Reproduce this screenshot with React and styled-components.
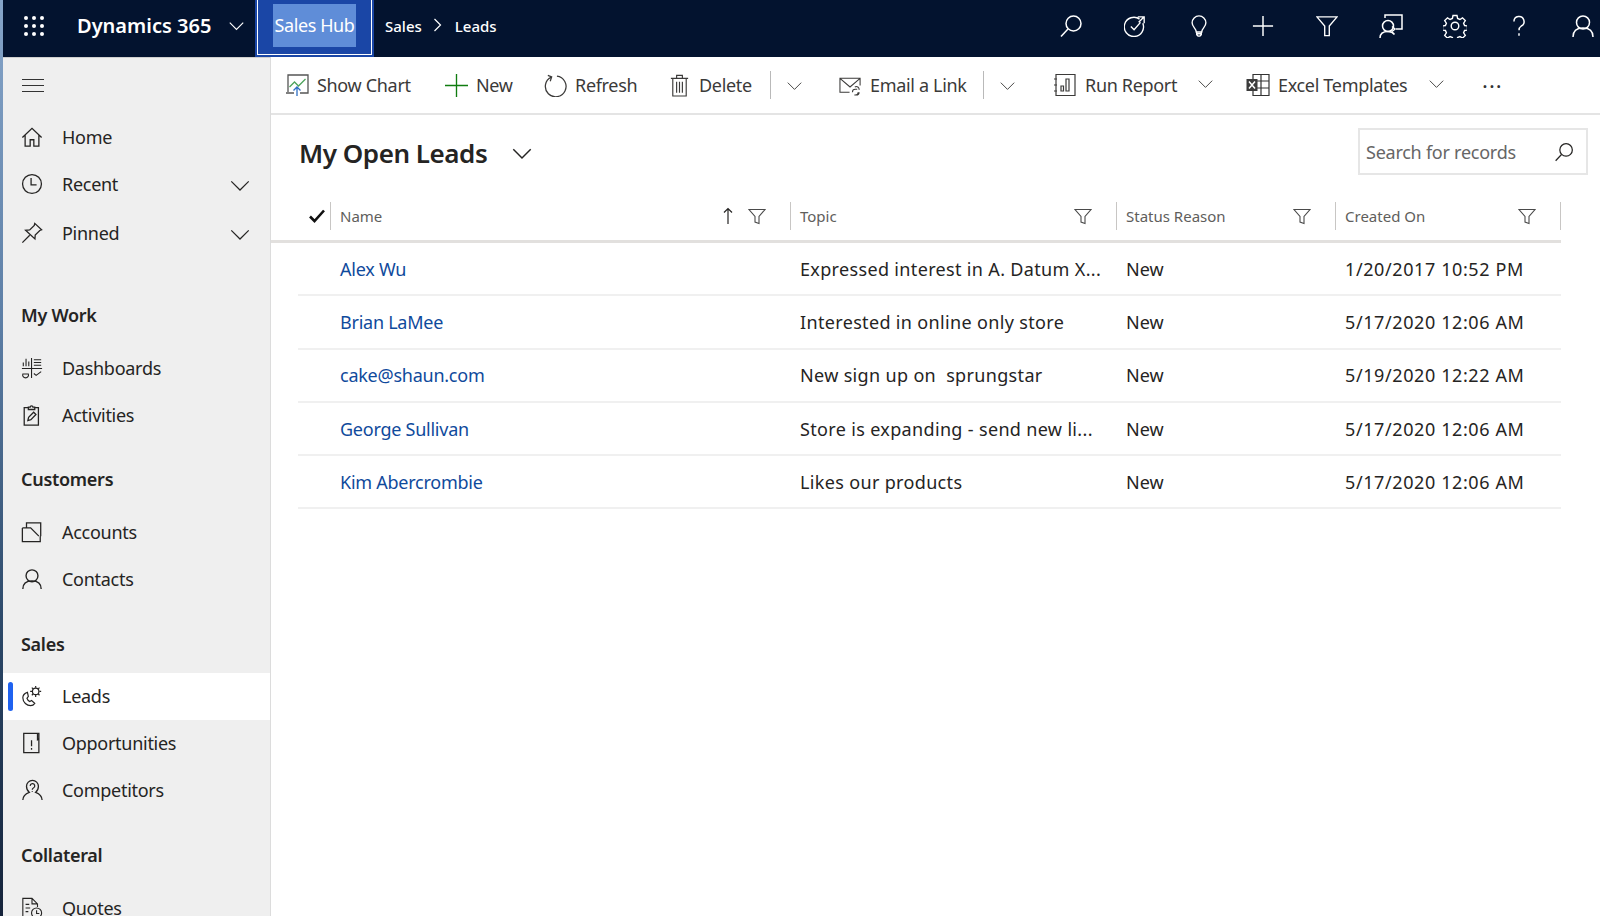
import React from "react";
import styled, { createGlobalStyle } from "styled-components";

const GlobalStyle = createGlobalStyle`
  html, body { margin: 0; padding: 0; height: 100%; overflow: hidden; background: #fff; }
  body { font-family: "Noto Sans", "Open Sans", "Liberation Sans", sans-serif; color: #252423; }
`;

const Svg = ({ size = 22, box = 24, children, color = "currentColor", sw = 1.4 }) => (
  <svg width={size} height={size} viewBox={`0 0 ${box} ${box}`} fill="none" stroke={color} strokeWidth={sw}>
    {children}
  </svg>
);

const Chevron = ({ size = 22, sw = 1.4, color }) => (
  <Svg size={size} sw={sw} color={color}>
    <path d="M2.5 8l9.5 9.5L21.5 8" />
  </Svg>
);

const Funnel = () => (
  <Svg size={18} box={18} sw={1.1} color="#4a4a4a">
    <path d="M1 2.5h16l-6 7v7l-4-1.5v-5.5z" />
  </Svg>
);

const Lens = ({ size = 24, color }) => (
  <Svg size={size} sw={1.5} color={color}>
    <circle cx="14.5" cy="9.5" r="7.5" />
    <path d="M9 15L2 22.5" />
  </Svg>
);

const Person = ({ size = 24, color }) => (
  <Svg size={size} sw={1.5} color={color}>
    <circle cx="12" cy="8.5" r="6.5" />
    <path d="M2 23c0-6 4-9 10-9s10 3 10 9" />
  </Svg>
);

const icons = {
  home: (
    <Svg>
      <path d="M1.5 12.5L12 2.5l10.5 10M4.5 10v12h5.5v-7h4v7h5.5V10" />
    </Svg>
  ),
  recent: (
    <Svg>
      <circle cx="12" cy="12" r="10.3" />
      <path d="M11 5.5V13h6" />
    </Svg>
  ),
  pinned: (
    <Svg>
      <path d="M15 1.5l7.5 7-2 .8-5 5-.3 4.2L5 9l4.5-.3 5-5zM9.5 14.5L1.5 22.5" />
    </Svg>
  ),
  dashboards: (
    <Svg sw={1.2}>
      <path d="M1 12.5h22M11.5 1v22M14 3h8M14 6h8M14 9h8M2.5 10V6M5.5 10V2M8.5 10V5M14 18l2.5 2 5.500-4M2 18.5a3.2 3.2 0 1 0 6 0z" />
    </Svg>
  ),
  activities: (
    <Svg>
      <path d="M8 4H3.5v19h15.5V4H15M8 6V3.5h2a1.5 1.5 0 0 1 3 0h2V6z" />
      <path d="M7.5 18l.8-3.5 5.5-5.5 2.5 2.5-5.5 5.5z" />
    </Svg>
  ),
  accounts: (
    <Svg>
      <path d="M1.5 7.5h9l9 9M1.500 7.5v15h19.5v-6M6 7.5V2h15.5v14.5" />
    </Svg>
  ),
  contacts: <Person size={22} />,
  leads: (
    <Svg sw={1.3}>
      <path d="M7 8C4 9 2 11 2 14c0 5 4.5 8.5 8.5 8.5 2 0 3.5-1 4.5-2.5l-3.5-3-2 1c-1.5-.8-2.5-2-3-3.5l1.5-2z" />
      <circle cx="16" cy="7" r="3.5" />
      <path d="M16 1v2M16 11v2M10 7h2M20 7h2M11.8 2.8l1.4 1.4M18.800 9.8l1.4 1.4M11.8 11.2l1.4-1.4M18.8 4.2l1.4-1.4" />
    </Svg>
  ),
  opportunities: (
    <Svg>
      <path d="M18 1.5H3v21h16.5V1.5H18v7l1.5-1M11.5 9v6.5M11.5 17.500v1.8" />
    </Svg>
  ),
  competitors: (
    <Svg>
      <path d="M2 23c0-5 3-7 7-8.5-2-1.5-3-3.5-3-6.5a6.5 6.5 0 0 1 13 0c0 3-1 5-3 6.5 4 1.5 7 3.5 7 8.5" />
      <path d="M10 7.5a2.5 2.5 0 1 1 3.5 2.3c-1 .5-1.2 1-1.2 2M12.3 13v1" />
    </Svg>
  ),
  quotes: (
    <Svg sw={1.2}>
      <path d="M10 23H2V1.5h10l6 6V11M12 1.5v6h6M5 8h4M5 12h5M5 16h3" />
      <circle cx="17" cy="17.5" r="5.5" />
      <path d="M17 14.5V18h3" />
    </Svg>
  ),
  chart: (
    <svg width="24" height="24" viewBox="0 0 24 24" fill="none" strokeWidth="1.3">
      <path d="M3 19V2h20v18h-8M9 20H1" stroke="#555" />
      <path d="M4.5 14l5-5 4 4 7-7" stroke="#4ea35c" />
      <path d="M12 23v-9M8.5 17.5L12 14l3.5 3.5" stroke="#2f6fc4" />
    </svg>
  ),
  plus: (
    <Svg size={23} sw={1.4} color="#107c10">
      <path d="M12 0v24M0 12h24" />
    </Svg>
  ),
  refresh: (
    <Svg size={23} sw={1.3}>
      <path d="M7.5 3.2a10.8 10.8 0 1 0 6-1M4 1.5L8 3 6.5 7.5" />
    </Svg>
  ),
  trash: (
    <Svg size={23} sw={1.2}>
      <path d="M3 4.5h18M5 4.5V23h14V4.5M9 4.5v-3h6v3M9 8v11.5M12 8v11.5M15 8v11.5" />
    </Svg>
  ),
  mail: (
    <Svg size={23} sw={1.1}>
      <path d="M11 19H1V4.5h21V12M1 4.5l10.5 9 10.5-9" />
      <path d="M14 19a3 3 0 0 1 3-3h2M20 19a3 3 0 0 1-3 3h-1M16.5 13.5a3 3 0 0 1 4.5 3M21 19a3 3 0 0 1-3 3" />
    </Svg>
  ),
  report: (
    <Svg size={24} sw={1.2}>
      <path d="M3 1.5h19v21H3zM1 6h3M1 12h3M1 18h3M8 18v-5h2.5v5zM13 18V6h3v12z" />
    </Svg>
  ),
  excel: (
    <svg width="24" height="24" viewBox="0 0 24 24" fill="none" stroke="#333" strokeWidth="1.2">
      <path d="M7 1.5h16v21H7zM7 8h16M7 15h16M15 1.5v21" />
      <rect x="0.5" y="6" width="11" height="12" fill="#3b3b3b" stroke="none" />
      <path d="M3 8.5l6 7M9 8.5l-6 7" stroke="#fff" strokeWidth="1.5" />
    </svg>
  ),
};

const headerIcons = [
  <Lens key="s" color="#fff" />,
  <Svg key="t" color="#fff" sw={1.5}>
    <path d="M17 4.5A10.5 10.5 0 1 0 20.5 9M7.5 12.5L11 16l7-8M15 2h7v7M22 2l-6 6" />
  </Svg>,
  <Svg key="b" color="#fff" sw={1.5}>
    <path d="M9 18.5c0-4-4.5-5-4.500-10a7.500 7.500 0 0 1 15 0c0 5-4.500 6-4.500 10zM9.500 18.500v3L11 23h2l1.500-1.500v-3M9.500 20.500h5" />
  </Svg>,
  <Svg key="p" color="#fff" sw={1.6}>
    <path d="M12 1v22M1 12h22" />
  </Svg>,
  <Svg key="f" color="#fff" sw={1.5}>
    <path d="M1 2h22l-8.500 10v10.500h-5V12z" />
  </Svg>,
  <Svg key="a" color="#fff" size={24} sw={1.5}>
    <circle cx="9" cy="12" r="5.5" />
    <path d="M1 24c0-4.500 3.500-6.500 8-6.500 3 0 5 1 6.500 3M6 4V1h17v14h-6M13 12.500l3 2.500-3 2.500" />
  </Svg>,
  <Svg key="g" color="#fff" size={24} sw={1.4}>
    <circle cx="12" cy="12" r="3.8" />
    <path d="M10 1.500h4l.6 3 2.300 1 2.600-1.700 2.800 2.800-1.700 2.600 1 2.300 2.900.5v4l-2.900.5-1 2.300 1.700 2.600-2.800 2.800-2.600-1.700-2.300 1-.6 2.900h-4l-.6-2.900-2.300-1-2.600 1.700-2.800-2.800 1.700-2.600-1-2.300-2.900-.5v-4l2.900-.5 1-2.300-1.700-2.600 2.800-2.800 2.600 1.700 2.300-1z" />
  </Svg>,
  <Svg key="h" color="#fff" sw={1.6}>
    <path d="M6.500 7a5.500 5.500 0 1 1 8 5c-1.500 1-2.500 2-2.500 4.500M12 20v2.500" />
  </Svg>,
  <Person key="u" color="#fff" />,
];

const navTop = [
  { label: "Home", icon: "home" },
  { label: "Recent", icon: "recent", more: true },
  { label: "Pinned", icon: "pinned", more: true, top: 2 },
];

const navSections = [
  { title: "My Work", top: 35, gap: 6, items: [["Dashboards", "dashboards"], ["Activities", "activities"]] },
  { title: "Customers", top: 17, gap: 6, items: [["Accounts", "accounts"], ["Contacts", "contacts"]] },
  { title: "Sales", top: 18, gap: 5, items: [["Leads", "leads"], ["Opportunities", "opportunities"], ["Competitors", "competitors"]] },
  { title: "Collateral", top: 18, gap: 6, items: [["Quotes", "quotes"]] },
];

const tools = [
  { label: "Show Chart", icon: "chart", w: 160 },
  { label: "New", icon: "plus", w: 99 },
  { label: "Refresh", icon: "refresh", w: 124 },
  { label: "Delete", icon: "trash", w: 102, sep: true },
  { label: "Email a Link", icon: "mail", w: 144, sep: true, lead: 29 },
  { label: "Run Report", icon: "report", w: 193, chevron: 32, lead: 30 },
  { label: "Excel Templates", icon: "excel", w: 238, chevron: 39 },
];

const rows = [
  ["Alex Wu", "Expressed interest in A. Datum X...", "New", "1/20/2017 10:52 PM"],
  ["Brian LaMee", "Interested in online only store", "New", "5/17/2020 12:06 AM"],
  ["cake@shaun.com", "New sign up on  sprungstar", "New", "5/19/2020 12:22 AM"],
  ["George Sullivan", "Store is expanding - send new li...", "New", "5/17/2020 12:06 AM"],
  ["Kim Abercrombie", "Likes our products", "New", "5/17/2020 12:06 AM"],
];

export default function App() {
  return (
    <Page>
      <GlobalStyle />
      <TopBar>
        <Waffle>
          {Array.from({ length: 9 }).map((_, i) => (
            <i key={i} />
          ))}
        </Waffle>
        <Brand>Dynamics 365</Brand>
        <BrandChevron>
          <Chevron size={17} color="#fff" sw={1.6} />
        </BrandChevron>
        <HubBox>
          <HubLabel>Sales Hub</HubLabel>
        </HubBox>
        <Crumb $lead={13}>Sales</Crumb>
        <CrumbArrow>
          <svg width="10" height="14" viewBox="0 0 10 14" fill="none" stroke="#fff" strokeWidth="1.2">
            <path d="M1.5 1l6 6-6 6" />
          </svg>
        </CrumbArrow>
        <Crumb>Leads</Crumb>
        <HeaderIcons>
          {headerIcons.map((icon) => (
            <HeaderIcon key={icon.key}>{icon}</HeaderIcon>
          ))}
        </HeaderIcons>
      </TopBar>
      <Body>
        <SideNav>
          <Hamburger>
            <span />
            <span />
            <span />
          </Hamburger>
          {navTop.map((item) => (
            <NavItem key={item.label} $top={item.top}>
              <NavIcon>{icons[item.icon]}</NavIcon>
              {item.label}
              {item.more && (
                <NavChevron>
                  <Chevron size={22} sw={1.3} />
                </NavChevron>
              )}
            </NavItem>
          ))}
          {navSections.map((section) => (
            <React.Fragment key={section.title}>
              <SectionTitle $top={section.top} $bottom={section.gap}>
                {section.title}
              </SectionTitle>
              {section.items.map(([label, icon]) => (
                <NavItem key={label} $active={label === "Leads"}>
                  <NavIcon>{icons[icon]}</NavIcon>
                  {label}
                </NavItem>
              ))}
            </React.Fragment>
          ))}
        </SideNav>
        <Main>
          <Toolbar>
            {tools.map((tool) => (
              <React.Fragment key={tool.label}>
                <ToolButton $w={tool.w} $lead={tool.lead}>
                  {icons[tool.icon]}
                  <ToolLabel>{tool.label}</ToolLabel>
                  {tool.chevron && (
                    <ToolChevron $right={tool.chevron}>
                      <Chevron size={17} sw={1.3} />
                    </ToolChevron>
                  )}
                </ToolButton>
                {tool.sep && (
                  <SplitChevron>
                    <Chevron size={17} sw={1.3} />
                  </SplitChevron>
                )}
              </React.Fragment>
            ))}
            <MoreDots>···</MoreDots>
          </Toolbar>
          <ViewHeader>
            <ViewTitle>My Open Leads</ViewTitle>
            <TitleChevron>
              <Chevron size={22} sw={1.6} />
            </TitleChevron>
            <SearchBox>
              <SearchText>Search for records</SearchText>
              <Lens size={20} color="#252423" />
            </SearchBox>
          </ViewHeader>
          <Grid>
            <HeaderRow>
              <CheckCell>
                <svg width="16" height="14" viewBox="0 0 16 14" fill="none" stroke="#111" strokeWidth="2.6">
                  <path d="M1 7.5L5.5 12 15 1.5" />
                </svg>
              </CheckCell>
              <HeaderCell>
                Name
                <SortArrow>
                  <svg width="12" height="18" viewBox="0 0 12 18" fill="none" stroke="#252423" strokeWidth="1.2">
                    <path d="M6 17V1.5M2 5.5l4-4 4 4" />
                  </svg>
                </SortArrow>
                <Funnel />
              </HeaderCell>
              <HeaderCell>
                Topic
                <Funnel />
              </HeaderCell>
              <HeaderCell>
                Status Reason
                <Funnel />
              </HeaderCell>
              <HeaderCell $last>
                Created On
                <Funnel />
              </HeaderCell>
            </HeaderRow>
            {rows.map(([name, topic, status, created]) => (
              <DataRow key={name}>
                <span />
                <NameLink>{name}</NameLink>
                <TopicCell>{topic}</TopicCell>
                <DataCell>{status}</DataCell>
                <DateCell>{created}</DateCell>
              </DataRow>
            ))}
          </Grid>
        </Main>
      </Body>
    </Page>
  );
}

const Page = styled.div`
  height: 916px;
  width: 1600px;
  box-sizing: border-box;
  padding-left: 3px;
  overflow: hidden;
  display: flex;
  flex-direction: column;
  background: linear-gradient(180deg, #86a5c9 0%, #5d7fa6 35%, #2a4666 70%, #15233a 100%);
`;

const TopBar = styled.header`
  flex: none;
  height: 57px;
  padding-bottom: 6px;
  background: #03132f;
  display: flex;
  align-items: center;
  color: #fff;
  box-sizing: border-box;
`;

const Waffle = styled.div`
  margin-left: 21px;
  width: 20px;
  display: grid;
  grid-template-columns: repeat(3, 4px);
  justify-content: space-between;
  row-gap: 4px;
  i {
    width: 4px;
    height: 4px;
    border-radius: 50%;
    background: #fff;
  }
`;

const Brand = styled.div`
  margin-left: 33px;
  font-size: 20px;
  font-weight: 600;
  width: 139px;
  white-space: nowrap;
`;

const BrandChevron = styled.div`
  margin-left: 12px;
  display: flex;
`;

const HubBox = styled.div`
  align-self: flex-start;
  margin-left: 12px;
  width: 115px;
  height: 55px;
  box-sizing: border-box;
  background: #1a46a6;
  border: 1px solid #fff;
  border-top: none;
  box-shadow: 0 0 0 2px #1a46a6;
  padding: 4px 15px 7px;
  display: flex;
`;

const HubLabel = styled.div`
  flex: 1;
  background: #5f8dd8;
  color: #fff;
  font-size: 18px;
  line-height: 42px;
  text-align: center;
  white-space: nowrap;
  letter-spacing: -0.4px;
`;

const Crumb = styled.div`
  margin-left: ${(p) => p.$lead || 0}px;
  font-size: 15px;
  font-weight: 500;
  white-space: nowrap;
`;

const CrumbArrow = styled.div`
  display: flex;
  margin: -2px 12px 0 11px;
`;

const HeaderIcons = styled.div`
  margin-left: auto;
  margin-right: -15px;
  display: flex;
`;

const HeaderIcon = styled.div`
  width: 64px;
  height: 50px;
  display: flex;
  align-items: center;
  justify-content: center;
`;

const Body = styled.div`
  flex: 1;
  min-height: 0;
  display: flex;
`;

const SideNav = styled.nav`
  flex: none;
  width: 267px;
  background: #efefef;
  border-right: 1px solid #dcdcdc;
  box-sizing: content-box;
  box-shadow: inset 0 1px 0 #cfcfcf;
  font-size: 18px;
  letter-spacing: -0.28px;
  overflow: hidden;
`;

const Hamburger = styled.div`
  height: 57px;
  box-sizing: border-box;
  padding-left: 19px;
  display: flex;
  flex-direction: column;
  justify-content: center;
  gap: 4.5px;
  span {
    width: 22px;
    height: 1.5px;
    background: #333;
  }
`;

const NavItem = styled.div`
  position: relative;
  height: 47px;
  box-sizing: border-box;
  padding-bottom: 1px;
  margin-top: ${(p) => p.$top || 0}px;
  display: flex;
  align-items: center;
  padding-left: 59px;
  color: #252423;
  background: ${(p) => (p.$active ? "#fff" : "transparent")};
  ${(p) =>
    p.$active &&
    `&::before {
      content: "";
      position: absolute;
      left: 5px;
      top: 9px;
      width: 5px;
      height: 29px;
      border-radius: 3px;
      background: #1f62f0;
    }`}
`;

const NavIcon = styled.span`
  position: absolute;
  left: 18px;
  top: 12px;
  width: 22px;
  height: 22px;
  display: flex;
`;

const NavChevron = styled.span`
  position: absolute;
  right: 19px;
  top: 13px;
  display: flex;
`;

const SectionTitle = styled.div`
  height: 47px;
  line-height: 47px;
  margin-top: ${(p) => p.$top}px;
  margin-bottom: ${(p) => p.$bottom}px;
  padding-left: 18px;
  font-weight: 600;
  color: #252423;
`;

const Main = styled.main`
  flex: 1;
  min-width: 0;
  background: #fff;
`;

const Toolbar = styled.div`
  height: 58px;
  box-sizing: border-box;
  border-bottom: 2px solid #e4e4e4;
  padding-left: 14px;
  display: flex;
  align-items: center;
  font-size: 18px;
  letter-spacing: -0.32px;
  color: #3b3a39;
`;

const ToolButton = styled.div`
  flex: none;
  width: ${(p) => p.$w}px;
  margin-left: ${(p) => p.$lead || 0}px;
  display: flex;
  align-items: center;
  white-space: nowrap;
  position: relative;
`;

const ToolLabel = styled.span`
  margin-left: 8px;
`;

const ToolChevron = styled.span`
  position: absolute;
  right: ${(p) => p.$right}px;
  top: 2px;
  display: flex;
`;

const SplitChevron = styled.span`
  display: flex;
  align-items: center;
  height: 28px;
  padding-left: 15px;
  border-left: 1px solid #b9b9b9;
  width: 24px;
`;

const MoreDots = styled.span`
  margin-left: -2px;
  font-size: 22px;
  letter-spacing: 1px;
  color: #333;
`;

const ViewHeader = styled.div`
  height: 78px;
  padding: 13px 12px 0 28px;
  box-sizing: border-box;
  display: flex;
  align-items: flex-start;
`;

const ViewTitle = styled.h1`
  margin: 5px 0 0;
  font-size: 26px;
  line-height: 40px;
  font-weight: 600;
  letter-spacing: -0.45px;
  color: #252423;
  white-space: nowrap;
`;

const TitleChevron = styled.span`
  margin: 14px 0 0 24px;
  display: flex;
`;

const SearchBox = styled.div`
  margin-left: auto;
  width: 230px;
  height: 47px;
  box-sizing: border-box;
  border: 2px solid #e6e6e6;
  padding: 0 12px 0 6px;
  display: flex;
  align-items: center;
  justify-content: space-between;
`;

const SearchText = styled.span`
  font-size: 18px;
  letter-spacing: -0.25px;
  color: #666;
  white-space: nowrap;
`;

const columns = "32px 460px 326px 219px 226px";

const Grid = styled.div`
  padding-left: 27px;
  width: 1263px;
`;

const HeaderRow = styled.div`
  display: grid;
  grid-template-columns: ${columns};
  height: 50px;
  box-sizing: border-box;
  align-items: center;
  margin-left: -27px;
  padding: 0 0 1px 27px;
  width: 1290px;
  border-bottom: 3px solid #e2e0de;
`;

const CheckCell = styled.div`
  display: flex;
  justify-content: center;
  padding-left: 5px;
`;

const HeaderCell = styled.div`
  position: relative;
  height: 28px;
  border-left: 1px solid #c8c6c4;
  border-right: ${(p) => (p.$last ? "1px solid #c8c6c4" : "none")};
  padding: 0 24px 0 9px;
  display: flex;
  align-items: center;
  justify-content: space-between;
  font-size: 15px;
  color: #605e5c;
  white-space: nowrap;
`;

const SortArrow = styled.span`
  display: flex;
  margin-left: auto;
  margin-right: 14px;
`;

const DataRow = styled.div`
  display: grid;
  grid-template-columns: ${columns};
  height: 53.3px;
  box-sizing: border-box;
  align-items: center;
  border-bottom: 2px solid #f0f0f0;
  font-size: 18px;
`;

const DataCell = styled.div`
  padding-left: 10px;
  color: #252423;
  white-space: pre;
`;

const TopicCell = styled(DataCell)`
  letter-spacing: 0.34px;
`;

const DateCell = styled(DataCell)`
  letter-spacing: 0.6px;
`;

const NameLink = styled(DataCell)`
  color: #0f4a9c;
  letter-spacing: -0.25px;
`;
